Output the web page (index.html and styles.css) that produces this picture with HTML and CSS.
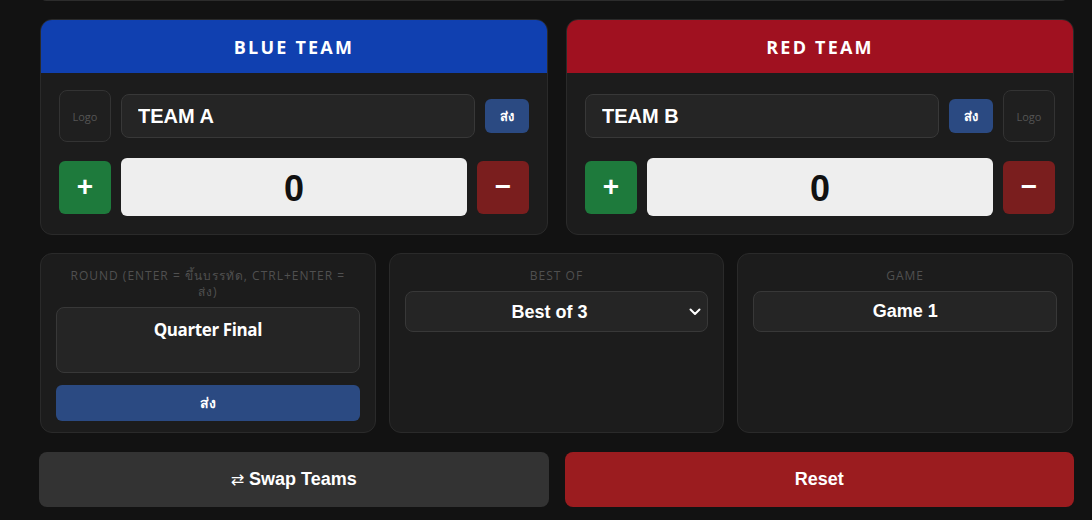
FILE: index.html
```html
<!DOCTYPE html>
<html lang="th">
<head>
<meta charset="utf-8">
<title>Scoreboard Control</title>
<link rel="stylesheet" href="styles.css">
</head>
<body>
<main class="panel-wrap">
  <div class="top-strip"></div>

  <section class="teams">
    <div class="team-card">
      <div class="team-head head-blue">BLUE TEAM</div>
      <div class="team-body">
        <div class="team-row">
          <div class="logo-box">Logo</div>
          <input class="team-name" type="text" value="TEAM A">
          <button class="send-sm">ส่ง</button>
        </div>
        <div class="team-row">
          <button class="step step-plus">+</button>
          <div class="score">0</div>
          <button class="step step-minus">−</button>
        </div>
      </div>
    </div>

    <div class="team-card">
      <div class="team-head head-red">RED TEAM</div>
      <div class="team-body">
        <div class="team-row">
          <input class="team-name" type="text" value="TEAM B">
          <button class="send-sm">ส่ง</button>
          <div class="logo-box">Logo</div>
        </div>
        <div class="team-row">
          <button class="step step-plus">+</button>
          <div class="score">0</div>
          <button class="step step-minus">−</button>
        </div>
      </div>
    </div>
  </section>

  <section class="meta">
    <div class="meta-box">
      <div class="meta-label">Round (Enter = ขึ้นบรรทัด, Ctrl+Enter =<br>ส่ง)</div>
      <textarea class="round-input">Quarter Final</textarea>
      <button class="send-wide">ส่ง</button>
    </div>
    <div class="meta-box">
      <div class="meta-label">Best of</div>
      <div class="select-wrap">
        <select class="field field-select">
          <option>Best of 3</option>
        </select>
        <svg class="chev" width="12" height="8" viewBox="0 0 12 8"><path d="M1.5 1.5 6 6l4.5-4.5" fill="none" stroke="#fff" stroke-width="2" stroke-linecap="round" stroke-linejoin="round"/></svg>
      </div>
    </div>
    <div class="meta-box">
      <div class="meta-label">Game</div>
      <input class="field" type="text" value="Game 1">
    </div>
  </section>

  <section class="actions">
    <button class="act act-swap"><span class="swap-ico">⇄</span> Swap Teams</button>
    <button class="act act-reset">Reset</button>
  </section>
</main>
</body>
</html>
```
FILE: styles.css
```css
* { box-sizing: border-box; }

html, body {
  margin: 0;
  background: #121212;
  height: 100%;
  overflow: hidden;
}

body {
  font-family: "Open Sans", "Noto Sans", "DejaVu Sans", sans-serif;
  color: #fff;
}

.panel-wrap {
  width: 1034px;
  margin-left: 40px;
  display: flex;
  flex-direction: column;
  gap: 18px;
}

.top-strip {
  height: 40px;
  margin: -39px 6px 0 0;
  background: #1a1a1a;
  border: 1px solid #2c2c2c;
  border-radius: 6px;
}

/* team cards */
.teams {
  display: grid;
  grid-template-columns: 1fr 1fr;
  gap: 18px;
}

.team-card {
  background: #1c1c1c;
  border: 1px solid #2a2a2a;
  border-radius: 12px;
  overflow: hidden;
}

.team-head {
  height: 53px;
  display: flex;
  align-items: center;
  justify-content: center;
  font-size: 18px;
  font-weight: 700;
  letter-spacing: 2.2px;
}
.head-blue { background: #1040b0; }
.head-red { background: #a01120; }

.team-body {
  padding: 17px 18px 18px;
  display: flex;
  flex-direction: column;
  gap: 16px;
}

.team-row {
  display: flex;
  align-items: center;
  gap: 10px;
}

.logo-box {
  flex: 0 0 52px;
  height: 52px;
  border: 1px solid #333;
  border-radius: 8px;
  background: #1f1f1f;
  display: flex;
  align-items: center;
  justify-content: center;
  font-size: 11px;
  color: #555;
}

.team-name {
  flex: 1;
  min-width: 0;
  height: 44px;
  background: #252525;
  border: 1px solid #383838;
  border-radius: 8px;
  padding: 0 16px;
  color: #fff;
  font-family: "Liberation Sans", Arial, sans-serif;
  font-size: 20px;
  font-weight: 700;
  outline: none;
}

.send-sm {
  flex: 0 0 44px;
  height: 34px;
  border: 0;
  border-radius: 6px;
  background: #2b4a82;
  color: #fff;
  font-family: inherit;
  font-size: 13px;
  font-weight: 600;
  padding: 0;
}

.step {
  flex: 0 0 52px;
  height: 53px;
  border: 0;
  border-radius: 6px;
  color: #fff;
  font-family: "Liberation Sans", Arial, sans-serif;
  font-size: 28px;
  font-weight: 700;
  padding: 0;
  line-height: 1;
}
.step-plus { background: #1e7a3c; }
.step-minus { background: #7a1e1e; }

.score {
  flex: 1;
  height: 58px;
  padding-top: 4px;
  background: #eeeeee;
  border-radius: 6px;
  color: #111;
  display: flex;
  align-items: center;
  justify-content: center;
  font-family: "Liberation Sans", Arial, sans-serif;
  font-size: 36px;
  font-weight: 700;
}

/* round / best-of / game */
.meta {
  display: grid;
  grid-template-columns: repeat(3, 1fr);
  gap: 13px;
  margin-right: 1px;
}

.meta-box {
  height: 180px;
  background: #1c1c1c;
  border: 1px solid #2a2a2a;
  border-radius: 12px;
  padding: 14px 15px 11px;
  display: flex;
  flex-direction: column;
}

.meta-label {
  font-size: 12px;
  line-height: 16px;
  letter-spacing: 1px;
  text-transform: uppercase;
  text-align: center;
  color: #505050;
  margin-bottom: 7px;
}

.round-input {
  height: 66px;
  flex: none;
  resize: none;
  background: #252525;
  border: 1px solid #383838;
  border-radius: 8px;
  padding: 10px 12px;
  color: #fff;
  font-family: "Open Sans", "Noto Sans", sans-serif;
  font-size: 17px;
  letter-spacing: -0.4px;
  font-weight: 700;
  text-align: center;
  outline: none;
}

.send-wide {
  margin-top: 12px;
  height: 36px;
  flex: none;
  border: 0;
  border-radius: 6px;
  background: #2b4a82;
  color: #fff;
  font-family: inherit;
  font-size: 14px;
  font-weight: 600;
}

.select-wrap {
  position: relative;
}

.field {
  width: 100%;
  height: 41px;
  background: #252525;
  border: 1px solid #383838;
  border-radius: 8px;
  color: #fff;
  font-family: "Liberation Sans", Arial, sans-serif;
  font-size: 18px;
  font-weight: 700;
  text-align: center;
  text-align-last: center;
  outline: none;
  appearance: none;
  -webkit-appearance: none;
  padding: 0 12px;
}

.field-select {
  padding: 0 26px 0 12px;
}

.chev {
  position: absolute;
  right: 7px;
  top: 17px;
}

/* bottom actions */
.actions {
  display: grid;
  grid-template-columns: 1fr 1fr;
  gap: 16px;
  margin: 1px 0 0 -1px;
}

.act {
  height: 55px;
  border: 0;
  border-radius: 8px;
  color: #fff;
  font-family: "Liberation Sans", Arial, sans-serif;
  font-size: 18px;
  font-weight: 700;
}
.act-swap { background: #333333; }
.act-reset { background: #9b1c1f; }

.swap-ico {
  font-family: "DejaVu Sans", sans-serif;
  font-weight: 400;
  font-size: 16px;
}
```
